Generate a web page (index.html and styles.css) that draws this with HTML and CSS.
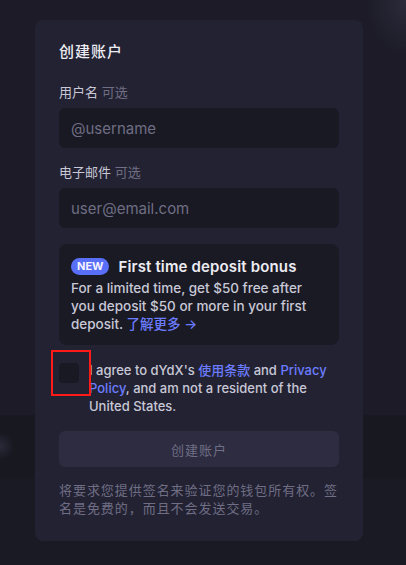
FILE: index.html
```html
<!doctype html>
<html>
    <head>
        <meta charset=utf-8>
        <title>创建账户</title>
        <link rel="stylesheet" href="styles.css">
    </head>
    <body>
        <div class="dialog">
            <h2 class="dialog-title">创建账户</h2>

            <label class="field-label">用户名 <span class="optional">可选</span></label>
            <input class="field-input" type=text placeholder="@username">

            <label class="field-label">电子邮件 <span class="optional">可选</span></label>
            <input class="field-input" type=text placeholder="user@email.com">

            <div class="bonus">
                <div class="bonus-head">
                    <span class="badge">NEW</span>
                    <span class="bonus-title">First time deposit bonus</span>
                </div>
                <p class="bonus-text">For a limited time, get $50 free after you deposit $50 or more in your first deposit. <a class="link" href="#">了解更多 →</a></p>
            </div>

            <div class="agree">
                <span class="checkbox"></span>
                <p class="agree-text">I agree to dYdX's <a class="link" href="#">使用条款</a> and <a class="link" href="#">Privacy Policy</a>, and am not a resident of the United States.</p>
                <span class="highlight"></span>
            </div>

            <button class="submit" type=button>创建账户</button>

            <p class="note">将要求您提供签名来验证您的钱包所有权。签名是免费的，而且不会发送交易。</p>
        </div>
    </body>
</html>
```

FILE: styles.css
```css
body {
    margin: 0;
    height: 565px;
    background:
        radial-gradient(circle at 0 446px, #2a2a3a 0, rgba(42,42,58,0) 14px),
        radial-gradient(ellipse at 406px 0, #2c2b3b 0, rgba(44,43,59,0) 40px),
        linear-gradient(to bottom, #1c1b27 0, #1c1b27 415px, #181821 415px, #181821 478px, #1a1a24 478px);
    font-family: Inter, "Noto Sans CJK SC", sans-serif;
    color: #c8c8d6;
    overflow: hidden;
}

.dialog {
    box-sizing: border-box;
    width: 328px;
    margin: 20px 0 0 35px;
    padding: 24px;
    background: #232233;
    border-radius: 8px;
    display: flex;
    flex-direction: column;
}

.dialog-title {
    margin: 0 0 24px;
    font-size: 15px;
    line-height: 16px;
    letter-spacing: 1px;
    font-weight: 500;
    color: #ececf2;
}

.field-label {
    font-size: 13px;
    line-height: 16px;
    color: #c8c8d6;
    margin-bottom: 8px;
}

.optional {
    color: #6f6e84;
}

.field-input {
    box-sizing: border-box;
    height: 40px;
    border: none;
    border-radius: 6px;
    background: #191923;
    padding: 0 12px;
    font-family: Inter, sans-serif;
    font-size: 15px;
    color: #c8c8d6;
    margin-bottom: 16px;
}

.field-input::placeholder {
    color: #6f6e84;
}

.bonus {
    background: #1a1a25;
    border-radius: 8px;
    padding: 12px;
    margin-bottom: 16px;
}

.bonus-head {
    display: flex;
    align-items: center;
    gap: 9px;
    height: 20px;
    margin-bottom: 3px;
}

.badge {
    background: #5a6ff8;
    color: #f4f4ff;
    font-size: 11px;
    font-weight: 700;
    line-height: 17px;
    padding: 0 6px;
    border-radius: 9px;
}

.bonus-title {
    font-size: 15px;
    letter-spacing: 0.15px;
    font-weight: 600;
    color: #ececf2;
}

.bonus-text {
    margin: 0;
    font-size: 13.5px;
    line-height: 18px;
    font-weight: 500;
}

.link {
    color: #6b7cff;
    text-decoration: none;
}

.agree {
    position: relative;
    display: flex;
    gap: 10px;
    margin-bottom: 16px;
}

.checkbox {
    flex: none;
    width: 20px;
    height: 20px;
    margin-top: 2px;
    border-radius: 4px;
    background: #191923;
}

.agree-text {
    margin: 0;
    font-size: 13px;
    line-height: 18px;
    font-weight: 500;
}

/* red annotation box over the checkbox */
.highlight {
    position: absolute;
    left: -8px;
    top: -11px;
    width: 36px;
    height: 42px;
    border: 2.5px solid #ff1a1a;
}

.submit {
    height: 36px;
    border: none;
    border-radius: 6px;
    background: #2d2c41;
    color: #6f6e84;
    font-family: Inter, "Noto Sans CJK SC", sans-serif;
    font-size: 13px;
    letter-spacing: 1px;
    margin-bottom: 14px;
}

.note {
    margin: 0;
    font-size: 13px;
    letter-spacing: 0.95px;
    line-height: 18px;
    color: #6f6e84;
}
```
